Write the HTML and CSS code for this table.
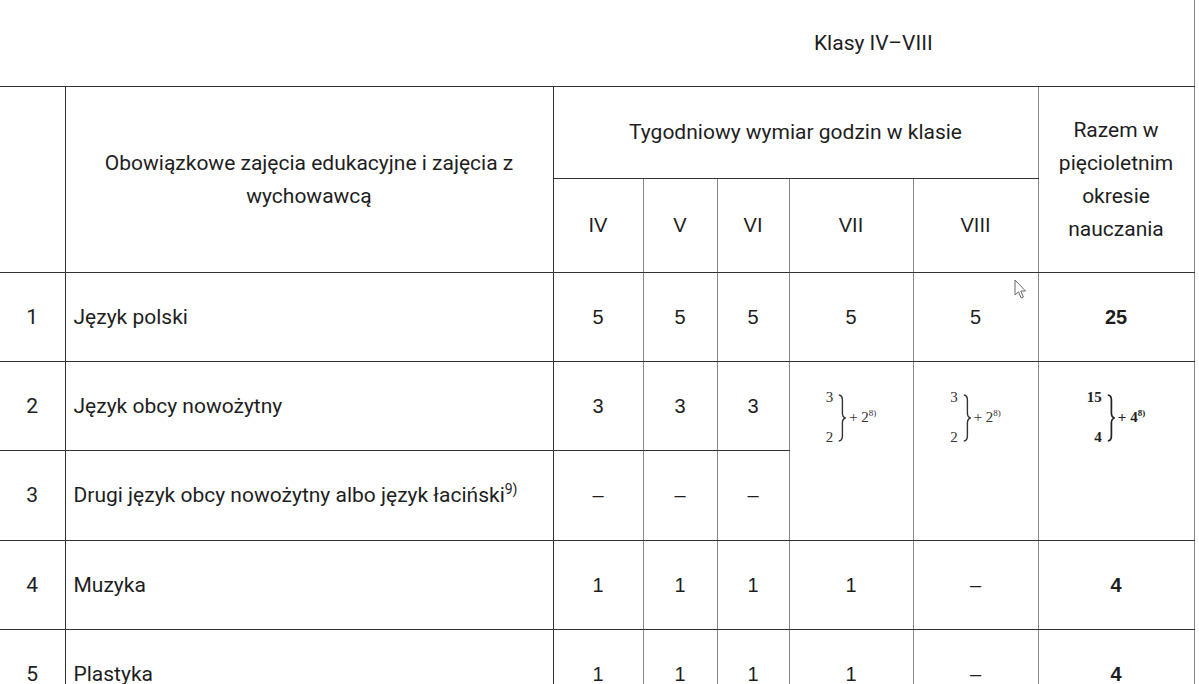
FILE: index.html
```html
<!DOCTYPE html>
<html lang="pl">
<head>
<meta charset="utf-8">
<title>Klasy IV–VIII</title>
<link rel="stylesheet" href="styles.css">
</head>
<body>
<table class="plan">
  <colgroup>
    <col class="c-lp"><col class="c-name"><col class="c-iv"><col class="c-v"><col class="c-vi"><col class="c-vii"><col class="c-viii"><col class="c-sum">
  </colgroup>
  <tr class="r-title">
    <td class="blank" colspan="2"></td>
    <td class="title" colspan="6">Klasy IV–VIII</td>
  </tr>
  <tr class="r-head1">
    <td class="lp dark-r" rowspan="2"></td>
    <td class="head dark-r" rowspan="2">Obowiązkowe zajęcia edukacyjne i zajęcia z<br>wychowawcą</td>
    <td class="head" colspan="5">Tygodniowy wymiar godzin w klasie</td>
    <td class="head sumhead" rowspan="2">Razem w<br>pięcioletnim<br>okresie<br>nauczania</td>
  </tr>
  <tr class="r-head2">
    <td class="roman">IV</td>
    <td class="roman">V</td>
    <td class="roman">VI</td>
    <td class="roman">VII</td>
    <td class="roman">VIII</td>
  </tr>
  <tr class="r-data">
    <td class="lp dark-r">1</td>
    <td class="name dark-r">Język polski</td>
    <td class="num">5</td>
    <td class="num">5</td>
    <td class="num">5</td>
    <td class="num">5</td>
    <td class="num">5</td>
    <td class="num total">25</td>
  </tr>
  <tr class="r-data">
    <td class="lp dark-r">2</td>
    <td class="name dark-r">Język obcy nowożytny</td>
    <td class="num">3</td>
    <td class="num">3</td>
    <td class="num">3</td>
    <td class="formula" rowspan="2">
      <div class="fx">
        <span class="stack"><span>3</span><span>2</span></span>
        <svg class="brace" viewBox="0 0 8 48" width="8" height="48"><path d="M0.8 1 C3.6 1.2 4.4 2.8 4.4 6 L4.4 19 C4.4 22 5.2 23.4 7.6 24 C5.2 24.6 4.4 26 4.4 29 L4.4 42 C4.4 45.2 3.6 46.8 0.8 47" fill="none" stroke="#333" stroke-width="1.4"/></svg>
        <span class="plus">+ 2<sup>8)</sup></span>
      </div>
    </td>
    <td class="formula" rowspan="2">
      <div class="fx">
        <span class="stack"><span>3</span><span>2</span></span>
        <svg class="brace" viewBox="0 0 8 48" width="8" height="48"><path d="M0.8 1 C3.6 1.2 4.4 2.8 4.4 6 L4.4 19 C4.4 22 5.2 23.4 7.6 24 C5.2 24.6 4.4 26 4.4 29 L4.4 42 C4.4 45.2 3.6 46.8 0.8 47" fill="none" stroke="#333" stroke-width="1.4"/></svg>
        <span class="plus">+ 2<sup>8)</sup></span>
      </div>
    </td>
    <td class="formula" rowspan="2">
      <div class="fx bold">
        <span class="stack"><span>15</span><span>4</span></span>
        <svg class="brace" viewBox="0 0 8 48" width="8" height="48"><path d="M0.8 1 C3.6 1.2 4.4 2.8 4.4 6 L4.4 19 C4.4 22 5.2 23.4 7.6 24 C5.2 24.6 4.4 26 4.4 29 L4.4 42 C4.4 45.2 3.6 46.8 0.8 47" fill="none" stroke="#222" stroke-width="1.7"/></svg>
        <span class="plus">+ 4<sup>8)</sup></span>
      </div>
    </td>
  </tr>
  <tr class="r-data tall">
    <td class="lp dark-r">3</td>
    <td class="name dark-r">Drugi język obcy nowożytny albo język łaciński<sup class="fn">9)</sup></td>
    <td class="num">–</td>
    <td class="num">–</td>
    <td class="num">–</td>
  </tr>
  <tr class="r-data">
    <td class="lp dark-r">4</td>
    <td class="name dark-r">Muzyka</td>
    <td class="num">1</td>
    <td class="num">1</td>
    <td class="num">1</td>
    <td class="num">1</td>
    <td class="num">–</td>
    <td class="num total">4</td>
  </tr>
  <tr class="r-data">
    <td class="lp dark-r">5</td>
    <td class="name dark-r">Plastyka</td>
    <td class="num">1</td>
    <td class="num">1</td>
    <td class="num">1</td>
    <td class="num">1</td>
    <td class="num">–</td>
    <td class="num total">4</td>
  </tr>
</table>
<svg class="cursor" width="14" height="22" viewBox="0 0 14 22"><path d="M1 1 L1 16 L4.5 12.8 L7.2 19 L9.4 18 L6.8 12 L11.5 12 Z" fill="#fff" stroke="#666" stroke-width="1" stroke-linejoin="round"/></svg>
</body>
</html>
```
FILE: styles.css
```css
html, body {
  margin: 0;
  padding: 0;
  background: #fff;
}
body {
  position: relative;
  height: 684px;
  overflow: hidden;
  font-family: Roboto, "Liberation Sans", sans-serif;
  color: #1e1e1e;
}
.plan {
  border-collapse: collapse;
  table-layout: fixed;
  width: 1194px;
}
.c-lp { width: 65px; }
.c-name { width: 488px; }
.c-iv { width: 90px; }
.c-v { width: 74px; }
.c-vi { width: 72px; }
.c-vii { width: 124px; }
.c-viii { width: 125px; }
.c-sum { width: 156px; }

.plan td {
  padding: 0;
  border-top: 1px solid #333;
  border-bottom: 1px solid #333;
  border-left: 1px solid #888;
  border-right: 1px solid #888;
  text-align: center;
  vertical-align: middle;
  font-size: 21px;
  line-height: 33px;
}
.plan .dark-r { border-right-color: #333; }
.r-title td { border-top: none; height: 86px; }
.r-title .blank { border-left: none; border-right: none; }
.r-title .title { border-left: none; border-right-color: #888; }
.r-head1 td { height: 91px; }
.r-head2 td { height: 93px; }
.r-data td { height: 88px; }
.r-data.tall td { height: 89px; }
.plan .lp { border-left: none; }
.plan .name {
  text-align: left;
  padding-left: 8px;
}
.fn {
  font-size: 14px;
  line-height: 0;
  vertical-align: 8px;
}
.plan .roman {
  font-family: "Liberation Sans", Arial, sans-serif;
  font-size: 20px;
}
.plan .num {
  font-family: "Liberation Sans Narrow", "Liberation Sans", Arial, sans-serif;
  font-size: 20px;
}
.plan .total {
  font-weight: bold;
  font-family: "Liberation Sans", Arial, sans-serif;
}
.plan .formula {
  vertical-align: top;
  padding-top: 28px;
  line-height: 15px;
}
.fx {
  display: flex;
  justify-content: center;
  align-items: center;
  font-family: "Liberation Serif", "Times New Roman", serif;
  font-size: 15px;
  line-height: 15px;
  color: #333;
}
.fx.bold .stack, .fx.bold .plus { font-weight: bold; color: #222; }
.stack {
  display: flex;
  flex-direction: column;
  justify-content: space-between;
  height: 55px;
  align-items: flex-end;
}
.brace { margin: 0 3px 0 5px; }
.plus sup {
  font-size: 9px;
  line-height: 0;
  vertical-align: 6px;
}
.cursor {
  position: absolute;
  left: 1014px;
  top: 279px;
}
```
